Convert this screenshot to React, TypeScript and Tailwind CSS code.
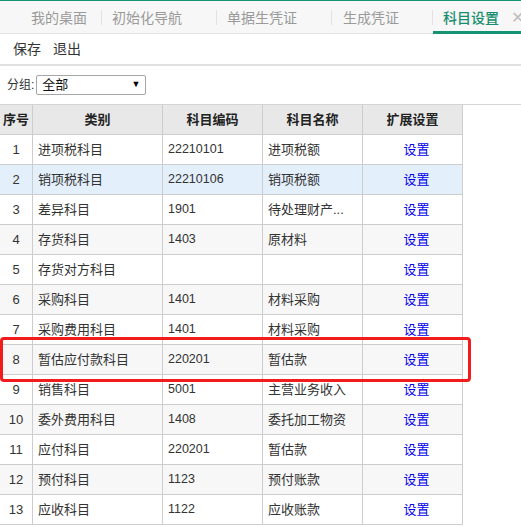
import React from "react";

const rows: { no: number; cat: string; code: string; name: string }[] = [
  { no: 1, cat: "进项税科目", code: "22210101", name: "进项税额" },
  { no: 2, cat: "销项税科目", code: "22210106", name: "销项税额" },
  { no: 3, cat: "差异科目", code: "1901", name: "待处理财产..." },
  { no: 4, cat: "存货科目", code: "1403", name: "原材料" },
  { no: 5, cat: "存货对方科目", code: "", name: "" },
  { no: 6, cat: "采购科目", code: "1401", name: "材料采购" },
  { no: 7, cat: "采购费用科目", code: "1401", name: "材料采购" },
  { no: 8, cat: "暂估应付款科目", code: "220201", name: "暂估款" },
  { no: 9, cat: "销售科目", code: "5001", name: "主营业务收入" },
  { no: 10, cat: "委外费用科目", code: "1408", name: "委托加工物资" },
  { no: 11, cat: "应付科目", code: "220201", name: "暂估款" },
  { no: 12, cat: "预付科目", code: "1123", name: "预付账款" },
  { no: 13, cat: "应收科目", code: "1122", name: "应收账款" },
];

function Sep() {
  return <div className="w-px h-[15px] self-center bg-[#e2e2e2]" />;
}

export default function App() {
  const font = { fontFamily: '"Liberation Sans", "Noto Sans CJK SC", sans-serif' };
  return (
    <div className="relative w-[521px] h-[527px] overflow-hidden bg-white text-[#333]" style={font}>
      {/* top green line */}
      <div className="h-px bg-[#139574]" />
      {/* tabs */}
      <div className="flex h-[33px] bg-[#f7f7f7] border-b border-[#e3e3e3] text-[14px] text-[#9a9a9a]">
        <div className="w-[101px] pl-[31px] pt-[2px] flex items-center">我的桌面</div>
        <Sep />
        <div className="w-[114px] pl-[10px] pt-[2px] flex items-center">初始化导航</div>
        <Sep />
        <div className="w-[114px] pl-[10px] pt-[2px] flex items-center">单据生凭证</div>
        <Sep />
        <div className="w-[100px] pl-[11px] pt-[2px] flex items-center">生成凭证</div>
        <Sep />
        <div className="relative flex-1 pl-[10px] pt-[2px] flex items-center text-[#188d6f] font-medium">
          科目设置
          <span className="absolute right-[-3px] top-[9px] text-[16px] leading-none text-[#bdbdbd] font-normal">✕</span>
          <div className="absolute left-0 right-0 bottom-[-1px] h-[3px] bg-[#149474]" />
        </div>
      </div>
      {/* toolbar */}
      <div className="flex items-center h-[32px] pl-[13px] gap-[12px] text-[14px] text-[#333] border-b-2 border-[#e0e0e0]">
        <span>保存</span>
        <span>退出</span>
      </div>
      {/* filter */}
      <div className="flex items-center h-[38px] pl-[7px] text-[12px]">
        <span>分组:</span>
        <div className="ml-[2px] w-[110px] h-[20px] border border-[#a6a6a6] rounded-[2px] flex items-center justify-between pl-[5px] pr-[5px] text-[13px] text-[#111]">
          <span>全部</span>
          <span className="text-[9px] text-black">▼</span>
        </div>
      </div>
      {/* table */}
      <div className="border-t border-[#d4d4d4] text-[13px]">
        <div className="flex h-[30px] bg-[#e8e8e8] border-b border-[#cdcdcd] font-bold text-[#222] w-[463px]">
          <div className="w-[33px] border-r border-[#cdcdcd] flex items-center justify-center">序号</div>
          <div className="w-[130px] border-r border-[#cdcdcd] flex items-center justify-center">类别</div>
          <div className="w-[100px] border-r border-[#cdcdcd] flex items-center justify-center">科目编码</div>
          <div className="w-[100px] border-r border-[#cdcdcd] flex items-center justify-center">科目名称</div>
          <div className="w-[100px] border-r border-[#cdcdcd] flex items-center justify-center">扩展设置</div>
        </div>
        {rows.map((r) => {
          const bg = r.no === 2 ? "bg-[#e4effc]" : r.no % 2 === 0 ? "bg-[#f7f7f7]" : "bg-white";
          return (
            <div key={r.no} className={`flex h-[30px] border-b border-[#cdcdcd] w-[463px] ${bg}`}>
              <div className="w-[33px] border-r border-[#cdcdcd] flex items-center justify-center">{r.no}</div>
              <div className="w-[130px] border-r border-[#cdcdcd] flex items-center pl-[5px] whitespace-nowrap overflow-hidden">{r.cat}</div>
              <div className="w-[100px] border-r border-[#cdcdcd] flex items-center pl-[5px] text-[12.5px]">{r.code}</div>
              <div className="w-[100px] border-r border-[#cdcdcd] flex items-center pl-[5px] whitespace-nowrap overflow-hidden">{r.name}</div>
              <div className="w-[100px] border-r border-[#cdcdcd] flex items-center justify-center pl-[8px] text-[#0000ee]">设置</div>
            </div>
          );
        })}
      </div>
      {/* red highlight */}
      <div className="absolute left-0 top-[337px] w-[471px] h-[45px] border-[3px] border-[#f21c1c] rounded-[4px]" />
    </div>
  );
}
